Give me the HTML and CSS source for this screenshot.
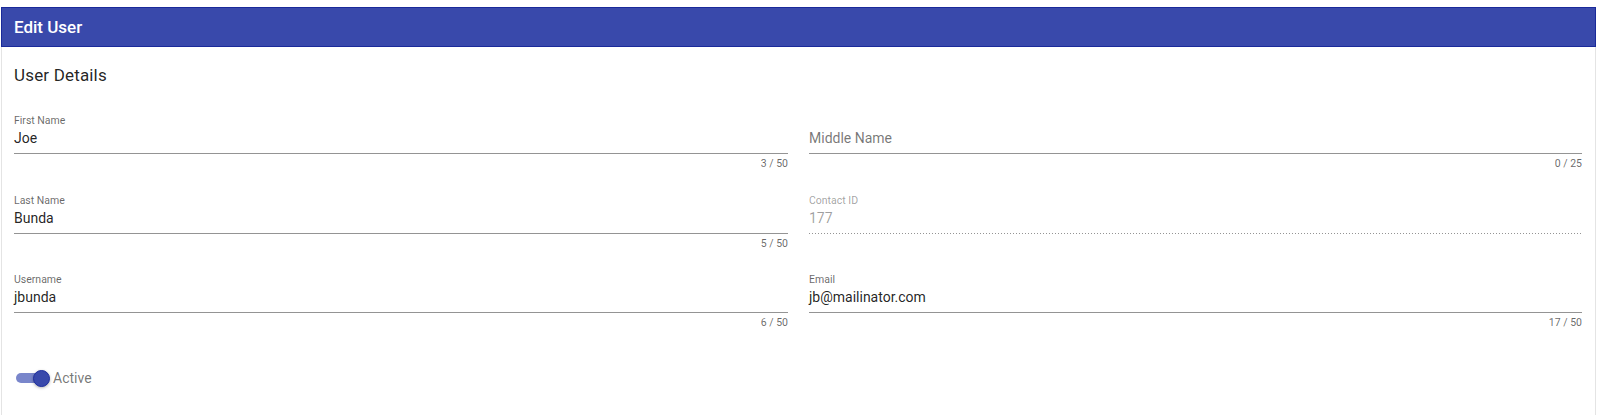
FILE: index.html
```html
<!DOCTYPE html>
<html lang="en">
<head>
<meta charset="utf-8">
<title>Edit User</title>
<link rel="stylesheet" href="styles.css">
</head>
<body>
<div class="page">
  <div class="panel">
    <div class="header">Edit User</div>
    <div class="body">
      <h2 class="title">User Details</h2>
      <div class="form">
        <div class="field">
          <div class="label">First Name</div>
          <div class="value">Joe</div>
          <div class="line"></div>
          <div class="hint">3 / 50</div>
        </div>
        <div class="field">
          <div class="label"></div>
          <div class="value placeholder">Middle Name</div>
          <div class="line"></div>
          <div class="hint">0 / 25</div>
        </div>
        <div class="field">
          <div class="label">Last Name</div>
          <div class="value">Bunda</div>
          <div class="line"></div>
          <div class="hint">5 / 50</div>
        </div>
        <div class="field disabled">
          <div class="label">Contact ID</div>
          <div class="value">177</div>
          <div class="line dotted"></div>
          <div class="hint"></div>
        </div>
        <div class="field">
          <div class="label">Username</div>
          <div class="value">jbunda</div>
          <div class="line"></div>
          <div class="hint">6 / 50</div>
        </div>
        <div class="field">
          <div class="label">Email</div>
          <div class="value">jb@mailinator.com</div>
          <div class="line"></div>
          <div class="hint">17 / 50</div>
        </div>
      </div>
      <div class="toggle-row">
        <span class="switch"><span class="track"></span><span class="thumb"></span></span>
        <span class="toggle-label">Active</span>
      </div>
    </div>
  </div>
</div>
</body>
</html>
```
FILE: styles.css
```css
html, body {
  margin: 0;
  background: #ffffff;
  font-family: Roboto, "Liberation Sans", Arial, sans-serif;
}
.page {
  padding: 7px 4px 0 1px;
  height: 408px;
  overflow: hidden;
}
.panel {
  height: 100%;
  display: flex;
  flex-direction: column;
}
.header {
  background: #3949ab;
  border: 1px solid #1a2a9a;
  height: 38px;
  line-height: 38px;
  padding-left: 12px;
  color: #ffffff;
  font-size: 17px;
  font-weight: 500;
}
.body {
  flex: 1;
  border-left: 1px solid #e4e4e4;
  border-right: 1px solid #e4e4e4;
  padding: 18px 13px 0 12px;
}
.title {
  margin: 0;
  font-size: 17px;
  line-height: 20px;
  font-weight: 400;
  color: rgba(0, 0, 0, 0.87);
  letter-spacing: 0.01em;
}
.form {
  margin-top: 30px;
  display: grid;
  grid-template-columns: 774px 773px;
  column-gap: 21px;
  row-gap: 24.5px;
}
.label {
  height: 12px;
  font-size: 10.5px;
  line-height: 12px;
  color: rgba(0, 0, 0, 0.6);
}
.value {
  margin-top: 2px;
  font-size: 14px;
  line-height: 18px;
  color: rgba(0, 0, 0, 0.87);
}
.value.placeholder {
  color: rgba(0, 0, 0, 0.55);
}
.disabled .label {
  color: rgba(0, 0, 0, 0.38);
}
.disabled .value {
  color: rgba(0, 0, 0, 0.38);
}
.line {
  margin-top: 6px;
  height: 1px;
  background: rgba(0, 0, 0, 0.42);
}
.line.dotted {
  background: linear-gradient(to right, rgba(0, 0, 0, 0.42) 0, rgba(0, 0, 0, 0.42) 50%, transparent 50%);
  background-size: 3px 1px;
  background-repeat: repeat-x;
}
.hint {
  margin-top: 4px;
  height: 12px;
  font-size: 10.5px;
  line-height: 12px;
  text-align: right;
  color: rgba(0, 0, 0, 0.6);
}
.toggle-row {
  margin-top: 40px;
  display: flex;
  align-items: center;
  height: 18px;
}
.switch {
  position: relative;
  display: inline-block;
  margin-left: 2px;
  width: 33.5px;
  height: 17px;
}
.track {
  position: absolute;
  left: 0;
  top: 3.5px;
  width: 30px;
  height: 10px;
  border-radius: 5px;
  background: #7986cb;
}
.thumb {
  position: absolute;
  left: 16.5px;
  top: 0;
  width: 15px;
  height: 15px;
  border-radius: 50%;
  background: #3949ab;
  border: 1px solid #1f2f9f;
  box-shadow: 0 1px 3px rgba(0, 0, 0, 0.3);
}
.toggle-label {
  margin-left: 3.5px;
  font-size: 14px;
  line-height: 18px;
  color: rgba(0, 0, 0, 0.55);
}
```
